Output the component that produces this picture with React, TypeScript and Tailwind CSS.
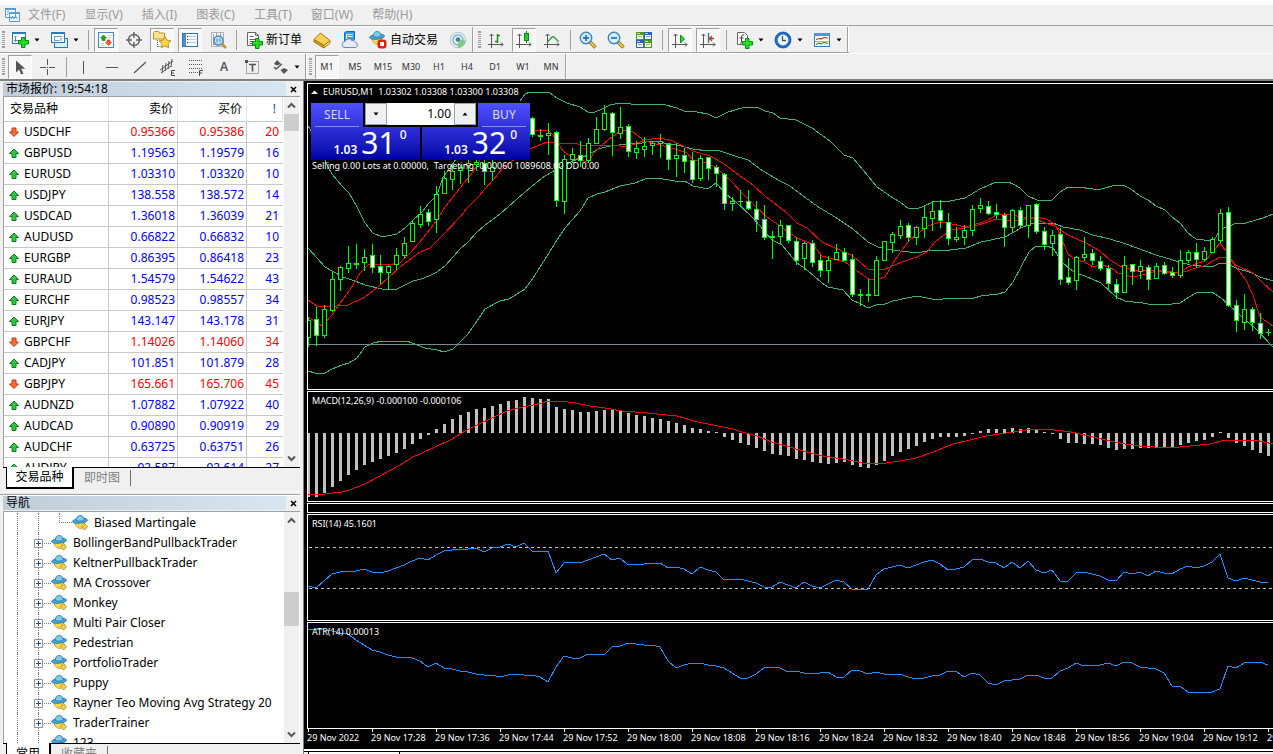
import React from "react";

type Candle = [high: number, top: number, bottom: number, low: number, filled: 0 | 1];

const FIRST_X = 308;
const STEP = 8;

const earlyCandles: Candle[] = [
  [317, 320, 337, 346, 0], [307, 319, 335, 345, 1], [305, 309, 335, 337, 0], [272, 279, 310, 311, 0],
  [266, 267, 279, 290, 0], [246, 263, 268, 272, 0], [244, 263, 264, 268, 0], [249, 257, 262, 270, 0],
  [244, 255, 267, 272, 1], [255, 266, 272, 283, 1], [265, 266, 272, 289, 0], [248, 255, 264, 269, 0],
  [237, 243, 255, 257, 0], [220, 223, 241, 241, 0], [206, 214, 224, 227, 0], [209, 212, 221, 225, 1],
  [186, 194, 219, 232, 0], [171, 178, 193, 193, 0], [164, 171, 179, 189, 0], [165, 167, 170, 183, 0],
  [160, 163, 165, 182, 0], [157, 162, 164, 170, 0], [160, 163, 171, 184, 1], [160, 167, 171, 180, 0],
];

const lateCandles: Candle[] = [
  [117, 118, 134, 136, 1], [129, 135, 136, 140, 0], [123, 133, 135, 154, 0], [131, 132, 200, 206, 1],
  [155, 159, 201, 213, 0], [148, 154, 159, 162, 0], [141, 155, 160, 166, 1], [138, 143, 160, 162, 0],
  [117, 129, 143, 143, 0], [105, 113, 129, 130, 0], [112, 113, 132, 155, 1], [107, 127, 133, 138, 0],
  [124, 126, 151, 156, 1], [141, 148, 152, 158, 0], [137, 146, 149, 156, 0], [141, 143, 145, 154, 0],
  [134, 141, 143, 157, 0], [143, 144, 159, 169, 1], [143, 155, 158, 176, 0], [148, 155, 161, 172, 1],
  [152, 160, 179, 182, 1], [155, 158, 178, 180, 0], [157, 157, 168, 179, 1], [165, 167, 173, 186, 1],
  [173, 174, 203, 209, 1], [197, 201, 203, 210, 0], [190, 201, 201, 206, 0], [190, 201, 208, 209, 1],
  [201, 209, 219, 231, 1], [205, 219, 237, 239, 1], [231, 236, 237, 258, 0], [220, 225, 236, 243, 0],
  [225, 225, 240, 242, 1], [237, 241, 260, 264, 1], [242, 243, 258, 269, 0], [240, 243, 262, 266, 1],
  [255, 260, 270, 276, 1], [256, 260, 270, 282, 0], [244, 252, 259, 259, 0], [248, 252, 260, 260, 1],
  [254, 259, 294, 296, 1], [289, 294, 295, 305, 0], [279, 294, 295, 301, 0], [256, 260, 295, 295, 0],
  [241, 241, 260, 260, 0], [232, 234, 242, 252, 0], [220, 226, 235, 238, 0], [223, 225, 237, 241, 1],
  [226, 227, 237, 244, 0], [206, 217, 228, 237, 0], [201, 211, 218, 230, 0], [200, 210, 220, 227, 1],
  [213, 222, 238, 244, 1], [227, 237, 239, 241, 0], [225, 230, 237, 244, 0], [205, 209, 230, 235, 0],
  [198, 205, 208, 212, 0], [201, 206, 213, 214, 1], [204, 212, 214, 218, 1], [213, 215, 227, 246, 1],
  [209, 210, 227, 232, 0], [207, 210, 225, 227, 1], [205, 205, 225, 237, 0], [203, 204, 231, 233, 1],
  [227, 231, 244, 249, 1], [230, 235, 243, 255, 0], [228, 234, 279, 284, 1], [258, 277, 282, 284, 1],
  [256, 257, 280, 289, 0], [237, 254, 257, 260, 0], [249, 253, 260, 264, 1], [256, 261, 268, 270, 1],
  [265, 268, 283, 288, 1], [279, 284, 292, 298, 1], [256, 265, 292, 292, 0], [264, 264, 271, 284, 1],
  [260, 266, 271, 278, 0], [265, 267, 279, 289, 1], [263, 266, 278, 278, 0], [262, 265, 273, 274, 1],
  [267, 272, 275, 277, 1], [250, 260, 275, 277, 0], [250, 252, 260, 262, 0], [243, 252, 259, 267, 1],
  [247, 251, 259, 260, 0], [237, 239, 252, 252, 0], [209, 213, 240, 242, 0], [207, 212, 305, 306, 1],
  [300, 305, 320, 331, 1], [294, 309, 322, 329, 0], [307, 309, 322, 330, 1], [313, 323, 333, 338, 1],
  [329, 332, 332, 335, 0],
];

const upperBandStart =
  "307,124 316,140 328,167 332,174 342,186 349,193 357,207 365,223 373,233 382,237 397,234 405,228 413,220 422,212 429,203 437,195 443,177 450,168 462,150";
const upperBand =
  "520,101 525,94 530,92 545,92 550,93 557,98 567,103 580,107 588,112 595,112 602,109 610,105 620,103 642,105 650,104 662,104 677,108 684,111 697,112 708,114 716,118 728,112 735,110 745,107 757,107 765,111 773,113 780,118 796,120 812,128 830,141 844,155 853,158 868,176 877,187 893,198 900,202 908,208 917,209 924,206 933,202 943,201 950,201 965,198 980,189 996,182 1008,182 1013,184 1020,188 1028,196 1037,200 1052,200 1060,192 1068,187 1078,187 1093,189 1101,189 1116,185 1125,186 1131,189 1140,196 1148,200 1156,206 1165,210 1172,217 1180,223 1188,233 1196,239 1212,241 1216,237 1220,229 1228,227 1236,223 1246,223 1263,218 1273,214";
const middleBand =
  "308,248 317,258 325,267 332,271 343,277 355,281 365,285 382,289 388,290 397,289 413,281 421,279 429,276 437,272 445,266 453,257 460,249 468,242 476,233 484,226 500,214 525,192 542,178 557,169 573,161 588,155 598,149 610,146 628,144 642,143 650,141 658,142 677,145 693,149 708,151 717,150 732,155 748,160 763,171 780,181 790,186 803,196 820,208 835,217 853,229 868,242 878,247 892,250 917,253 932,250 950,250 966,248 981,242 1005,237 1021,228 1030,224 1053,223 1063,227 1080,230 1093,235 1110,239 1126,244 1156,255 1173,260 1190,265 1212,267 1220,263 1226,263 1236,268 1252,273 1260,277 1273,281";
const lowerBand =
  "308,371 315,373 325,373 332,369 342,365 349,363 357,358 365,347 373,343 382,341 397,342 407,341 417,345 425,348 437,350 444,352 453,349 462,340 468,334 477,321 485,309 500,301 509,299 525,289 533,278 542,264 557,240 565,228 580,211 588,198 597,194 605,192 620,186 635,183 645,179 653,178 663,179 675,181 685,181 693,186 708,189 716,183 727,195 735,201 753,218 772,240 782,245 797,263 807,270 822,283 828,287 843,290 852,300 861,304 868,308 876,305 885,304 893,301 907,298 917,296 932,299 943,299 953,298 974,298 981,296 998,294 1005,292 1013,282 1021,267 1029,252 1036,246 1046,246 1053,248 1063,263 1070,269 1076,273 1085,276 1101,283 1116,297 1125,301 1133,302 1143,303 1148,304 1165,305 1180,303 1189,297 1196,293 1212,292 1221,298 1228,304 1243,318 1255,328 1273,347";
const fastAverage =
  "308,317 322,326 332,315 340,303 350,290 360,273 368,265 377,264 387,265 400,263 410,253 420,242 437,220 445,207 460,188 473,172 482,157 500,140 532,132 538,130 548,130 553,135 563,151 572,157 580,159 588,163 593,154 602,145 613,136 622,130 633,132 645,141 660,145 675,149 687,153 693,160 708,163 718,169 733,183 741,192 757,208 767,217 780,226 797,238 812,244 822,256 833,259 845,262 860,273 870,280 878,279 885,277 893,263 902,250 909,241 917,234 928,226 940,222 948,223 965,227 980,223 988,220 996,215 1010,214 1020,217 1036,217 1046,219 1053,223 1058,230 1068,254 1076,260 1085,262 1093,267 1101,265 1110,267 1118,273 1133,277 1146,274 1156,271 1168,273 1180,272 1188,267 1198,263 1205,261 1211,254 1220,243 1226,251 1236,267 1246,280 1253,295 1260,317 1273,326";
const slowAverage =
  "308,300 317,306 325,307 348,305 365,297 377,288 388,278 400,267 420,252 430,248 443,235 460,217 467,208 478,197 493,180 503,168 520,155 532,148 547,142 558,143 575,143 583,146 600,145 620,146 627,147 640,142 645,140 660,138 673,141 683,146 693,151 710,156 723,163 740,176 753,185 765,196 787,213 797,223 807,228 822,242 833,247 853,256 868,269 885,269 902,262 917,257 927,252 935,242 951,230 971,227 985,223 996,219 1018,221 1028,218 1038,220 1048,224 1055,226 1068,235 1086,243 1100,251 1110,260 1120,266 1135,271 1148,270 1165,271 1180,273 1190,270 1206,265 1220,257 1226,258 1236,265 1253,273 1263,283 1273,292";
const macdSignal =
  "308,494 325,494 342,492 349,490 365,484 380,476 400,465 413,457 433,448 452,439 467,430 477,425 492,418 507,411 523,407 533,405 542,403 548,401 560,401 575,403 590,406 605,408 622,411 647,413 677,416 698,422 713,425 733,429 742,432 757,436 772,442 783,445 803,451 823,456 843,459 863,463 886,463 900,461 916,458 933,452 953,444 970,440 986,436 1013,432 1026,430 1045,429 1063,431 1076,433 1093,437 1110,441 1125,444 1140,446 1156,447 1180,447 1210,444 1225,440 1255,440 1273,444";

const macdBars = [
  64, 64, 60, 54, 48, 42, 37, 32, 29, 26, 23, 20, 16, 11, 6, 2, -4, -9, -14, -18, -21, -24, -25, -27, -29, -32, -33,
  -36, -35, -34, -34, -26, -24, -23, -21, -21, -22, -23, -23, -22, -20, -18, -17, -15, -14, -12, -10, -8, -5, -4, -2,
  -1, 4, 7, 10, 12, 15, 18, 21, 22, 23, 26, 27, 29, 30, 31, 30, 29, 32, 34, 35, 32, 28, 23, 19, 16, 13, 9, 6, 4, 4, 4,
  3, 1, -2, -4, -4, -4, -5, -4, -5, -4, -1, 1, 6, 10, 10, 11, 11, 12, 15, 17, 16, 16, 15, 15, 15, 15, 14, 12, 10, 8,
  7, 4, -1, 5, 10, 13, 17, 20, 23,
];

const rsi = [
  586, 588, 581, 574, 572, 571, 571, 569, 572, 573, 571, 568, 565, 561, 558, 560, 555, 551, 550, 549, 549, 548, 552,
  548, 547, 544, 547, 543, 551, 552, 551, 573, 563, 562, 563, 560, 557, 554, 560, 558, 565, 564, 564, 563, 563, 568,
  567, 569, 574, 567, 570, 572, 580, 579, 579, 581, 583, 587, 587, 582, 585, 588, 582, 586, 588, 584, 580, 582, 589,
  589, 589, 575, 569, 567, 565, 568, 565, 562, 560, 564, 570, 569, 567, 560, 559, 562, 563, 568, 562, 568, 561, 570,
  573, 570, 581, 581, 573, 572, 574, 576, 580, 581, 572, 574, 572, 576, 571, 573, 574, 569, 566, 568, 566, 562, 554,
  578, 581, 578, 580, 582, 582,
];

const atr = [
  630, 629, 630, 631, 633, 634, 640, 645, 650, 652, 655, 657, 657, 658, 661, 667, 663, 668, 669, 671, 672, 674, 675,
  675, 677, 675, 674, 675, 675, 677, 682, 667, 656, 658, 658, 654, 654, 655, 647, 646, 643, 644, 645, 645, 647, 661,
  668, 665, 663, 663, 665, 666, 668, 673, 678, 678, 674, 668, 667, 668, 672, 671, 673, 673, 673, 672, 677, 677, 670,
  671, 674, 672, 674, 674, 674, 677, 679, 678, 676, 675, 671, 671, 677, 673, 675, 683, 685, 681, 680, 679, 675, 675,
  678, 678, 671, 668, 663, 666, 665, 665, 663, 666, 662, 663, 667, 668, 669, 673, 686, 686, 692, 692, 692, 692, 689,
  666, 668, 663, 662, 662, 665,
];

const toPoints = (values: number[]) => values.map((y, i) => `${FIRST_X + i * STEP},${y}`).join(" ");

function Line({ points, color }: { points: string; color: string }) {
  return <polyline points={points} fill="none" stroke={color} strokeWidth="1" shapeRendering="crispEdges" />;
}

function Candles({ data, from }: { data: Candle[]; from: number }) {
  return (
    <g shapeRendering="crispEdges">
      {data.map(([high, top, bottom, low, filled], i) => {
        const x = FIRST_X + (from + i) * STEP;
        return (
          <g key={i} fill="#00ff00">
            <rect x={x} y={high} width="1" height={low - high + 1} />
            <rect x={x - 2} y={top} width="5" height={bottom - top + 1} />
            {bottom - top > 1 && (
              <rect x={x - 1} y={top + 1} width="3" height={bottom - top - 1} fill={filled ? "#fff" : "#000"} />
            )}
          </g>
        );
      })}
    </g>
  );
}

/* ---------- icons ---------- */

function Icon({ children, size = 18 }: { children: React.ReactNode; size?: 16 | 18 | 20 }) {
  return (
    <svg viewBox={`0 0 ${size} ${size}`} width={size} height={size} className="shrink-0" aria-hidden="true">
      {children}
    </svg>
  );
}

const GreenPlus = ({ x, y }: { x: number; y: number }) => (
  <path
    transform={`translate(${x} ${y})`}
    d="M3.500 .5h3.500v3h3.500v3.500h-3.500v3.500h-3.500v-3.500h-3v-3.500h3z"
    fill="#22e022"
    stroke="#0a8a12"
  />
);

const NewChartIcon = () => (
  <Icon>
    <rect x="1.500" y="1.500" width="13" height="11" fill="#fff" stroke="#2f78b8" />
    <path d="M1 2h14" stroke="#2f78b8" strokeWidth="2" />
    <path d="M4.500 5v6M3 9.500h8M3.500 6l1-1 1 1" stroke="#5f8fb5" fill="none" />
    <GreenPlus x={7} y={6} />
  </Icon>
);
const ProfilesIcon = () => (
  <Icon>
    <rect x="4.500" y="7.500" width="13" height="9" fill="#d9ecfa" stroke="#2f78b8" />
    <rect x="1.500" y="1.500" width="13" height="10" fill="#f4faff" stroke="#2f78b8" />
    <path d="M1 2h14" stroke="#2f78b8" strokeWidth="2" />
    <path d="M4 5.500h8M4.500 5v4M4 9.500h5M11 7v3" stroke="#6d9dc4" />
  </Icon>
);
const MarketWatchIcon = () => (
  <Icon>
    <rect x="1.500" y="1.500" width="15" height="15" fill="#fff" stroke="#3b8bd0" />
    <path d="M6.500 4l3 3H8v2.500H5V7H3.500z" fill="#19a519" stroke="#0a7a10" strokeWidth=".6" />
    <path d="M11.500 14.500l-3-3H10V9h3v2.500h1.500z" fill="#ff5a2a" stroke="#c03000" strokeWidth=".6" />
    <path d="M11 4.500h4M11 6.500h3" stroke="#ccc" />
    <path d="M4 12.500h3M4 14.500h3" stroke="#ccc" />
  </Icon>
);
const TargetIcon = () => (
  <Icon>
    <circle cx="9" cy="9" r="5.500" fill="none" stroke="#606060" strokeWidth="1.400" />
    <path d="M9 1v6M9 11v6M1 9h6M11 9h6" stroke="#606060" strokeWidth="1.400" />
  </Icon>
);
const StarFolderIcon = () => (
  <Icon size={20}>
    <path d="M1.500 2.500l1-1h4l1 1.500h5v6h-11z" fill="#fbe58d" stroke="#b9922b" />
    <path d="M5.500 10v7M5.500 16.500h3" stroke="#555" strokeDasharray="1 1" />
    <path d="M13 6.500l1.900 3.700 4.100.6-3 2.900.7 4.100-3.700-1.900-3.700 1.900.7-4.100-3-2.900 4.100-.6z" fill="#ffd94a" stroke="#b9922b" />
  </Icon>
);
const NavigatorIcon = () => (
  <Icon>
    <rect x="1.500" y="2.500" width="15" height="13" fill="#fff" stroke="#2f78b8" />
    <path d="M3.500 3v12" stroke="#4b8fd0" strokeWidth="3" />
    <path d="M6 5.500h9M6 8.500h9M6 11.500h9" stroke="#b5c8de" />
    <path d="M6 5.500h1M6 8.500h1M6 11.500h1" stroke="#404040" />
  </Icon>
);
const TesterIcon = () => (
  <Icon>
    <path d="M2.500 1.500h12v14h-12z" fill="#f3f5f7" stroke="#b0b0b0" />
    <path d="M4.500 3v11M7.500 2v3M11.500 2v4M4 13.500h4" stroke="#8aa3b8" />
    <path d="M13 13l4 4" stroke="#c89420" strokeWidth="2.500" />
    <circle cx="9.500" cy="9.500" r="4.500" fill="#bfe0f7" stroke="#4d88bb" strokeWidth="1.400" />
    <path d="M8 7.500v4M11 7v4" stroke="#4d88bb" />
  </Icon>
);
const NewOrderIcon = () => (
  <Icon>
    <path d="M2.500 1.500h8l3 3v10h-11z" fill="#fff" stroke="#666" />
    <path d="M10.500 1.500v3h3M4.500 5.500h4M4.500 8.500h7M4.500 10.500h5M4.500 12.500h3" stroke="#666" fill="none" />
    <GreenPlus x={7} y={7} />
  </Icon>
);
const GoldIcon = () => (
  <Icon>
    <path d="M1 8.500l6.500-6.500 9.500 7.500-6 5z" fill="#f7cf55" stroke="#a8740f" />
    <path d="M1 8.500l10 6v2.500l-10-6z" fill="#d99b22" stroke="#a8740f" />
    <path d="M11 14.500l6-5v2.500l-6 5z" fill="#fbe9a6" stroke="#a8740f" />
  </Icon>
);
const CloudIcon = () => (
  <Icon>
    <path d="M3.500 1.500l2-1h8v8l-2 2h-8z" fill="#2a9ef0" stroke="#1273bd" />
    <path d="M6 3.500h6M6 5.500h6M5.500 3v6" stroke="#cfeaff" />
    <path d="M4 16.500a3 3 0 0 1 0-6 3.800 3.800 0 0 1 6.800-1 3 3 0 0 1 3.700 2 2.600 2.600 0 0 1 0 5z" fill="#e4ebf5" stroke="#7089ab" />
  </Icon>
);
const ExpertIcon = ({ stopped }: { stopped?: boolean }) => (
  <Icon size={stopped ? 18 : 16}>
    <path d="M3 7.500c.5 4.500 4 6.500 6.500 6l3-2.500.5-4z" fill="#f7d94c" stroke="#b08d1c" strokeWidth=".7" />
    <ellipse cx="8" cy="5.800" rx="7.500" ry="2.400" fill="#4aa9dd" stroke="#22709f" strokeWidth=".8" transform="rotate(-6 8 5.800)" />
    <path d="M4.200 5.500c0-3 1.500-5 4-5s3.800 1.800 4 4.500c-2 1.300-6 1.500-8 .5z" fill="#7fcbf0" stroke="#22709f" strokeWidth=".8" />
    {stopped ? (
      <g>
        <rect x="8.500" y="8.500" width="9" height="9" rx="3" fill="#dd2211" />
        <path d="M11 11h4v4h-4z" fill="#fff" />
      </g>
    ) : (
      <path d="M12.500 8.500l3 3.300-3 3.300-3-3.300z" fill="#f1d04b" stroke="#a98414" strokeWidth=".8" />
    )}
  </Icon>
);
const SignalIcon = () => (
  <Icon>
    <circle cx="9" cy="9" r="7.700" fill="#e6eef0" stroke="#a9c8d2" />
    <circle cx="9" cy="9" r="5" fill="none" stroke="#86b4c8" strokeWidth="1.400" />
    <path d="M9 9c.5 3 .3 6-.5 8 4.500 0 7.500-3 8-7-2-1-5-1.500-7.500-1z" fill="#6cc46c" opacity=".75" />
    <circle cx="9" cy="8.500" r="2.200" fill="#3a7fb0" />
  </Icon>
);
const Axes = () => <path d="M4.500 3v14M1 13.500h15M2.500 5l2-2 2 2M14 11.500l2 2-2 2" stroke="#555" fill="none" />;
const BarsIcon = () => (
  <Icon>
    <Axes />
    <path d="M10.500 3v9M8 10.500h3M10 4.500h3" stroke="#159015" strokeWidth="1.500" />
  </Icon>
);
const CandleIcon = () => (
  <Icon>
    <Axes />
    <path d="M11.500 0v12" stroke="#0a8a12" />
    <rect x="9.500" y="2.500" width="4" height="7" fill="#22cc33" stroke="#0a8a12" />
  </Icon>
);
const LineIcon = () => (
  <Icon>
    <Axes />
    <path d="M4.500 11l4-4.500c1-1 2-1 3 0l4 4" stroke="#2d9a3a" strokeWidth="1.300" fill="none" />
  </Icon>
);
const ZoomIcon = ({ plus }: { plus?: boolean }) => (
  <Icon>
    <path d="M11 11l5.500 5.500" stroke="#8f6a14" strokeWidth="3.500" />
    <path d="M11.500 11.500l4.700 4.700" stroke="#f3cf4b" strokeWidth="1.800" />
    <circle cx="7" cy="7" r="5.700" fill="#d8effc" stroke="#3a86c0" strokeWidth="1.400" />
    <path d={plus ? "M4 7h6M7 4v6" : "M4 7h6"} stroke="#2c7ab5" strokeWidth="1.800" />
  </Icon>
);
const tiles = [
  { x: 1, y: 1, color: "#4c9a14" },
  { x: 9, y: 1, color: "#2a5fd0" },
  { x: 1, y: 9, color: "#2a5fd0" },
  { x: 9, y: 9, color: "#4c9a14" },
];
const TilesIcon = () => (
  <Icon>
    {tiles.map(({ x, y, color }) => (
      <g key={`${x}-${y}`}>
        <rect x={x} y={y} width="8" height="8" fill={color} />
        <rect x={x + 1} y={y + 3} width="6" height="4" fill="#f4f8f0" />
        <rect x={x + 2} y={y + 4} width="4" height="1" fill={color} opacity=".6" />
        <rect x={x + 1} y={y + 1} width="3" height="1" fill="#fff" opacity=".7" />
      </g>
    ))}
  </Icon>
);
const AutoScrollIcon = () => (
  <Icon>
    <Axes />
    <path d="M9.500 4l4 4-4 4z" fill="#2fd04a" stroke="#0a8a12" />
  </Icon>
);
const ShiftIcon = () => (
  <Icon>
    <Axes />
    <path d="M9.500 2v10" stroke="#2f78b8" strokeWidth="1.400" />
    <path d="M15 7.500h-4M13 5l-2.500 2.500L13 10" stroke="#c0391b" strokeWidth="1.400" fill="none" />
  </Icon>
);
const IndicatorIcon = () => (
  <Icon>
    <path d="M2.500 1.500h7l3 3v9h-10z" fill="#fff" stroke="#666" />
    <path d="M9 4c-2-.5-2.500.5-2.500 2v5c0 1-.5 1.500-1.500 1.200M4.500 7h4" stroke="#444" fill="none" />
    <GreenPlus x={7} y={7} />
  </Icon>
);
const ClockIcon = () => (
  <Icon>
    <circle cx="9" cy="9" r="6.700" fill="#eef6ff" stroke="#1c6fce" strokeWidth="2.600" />
    <circle cx="9" cy="9" r="8" fill="none" stroke="#124f9c" strokeWidth=".8" />
    <path d="M8.500 5v4.500h3.500" stroke="#555" strokeWidth="1.300" fill="none" />
  </Icon>
);
const TemplateIcon = () => (
  <Icon>
    <rect x="1.500" y="2.500" width="15" height="13" fill="#fff" stroke="#2f78b8" />
    <path d="M1 3.500h16" stroke="#4e96d2" strokeWidth="3" />
    <path d="M3 8.500l3-1 2 .5 3-1.500 4 .5" stroke="#b0391b" strokeWidth="1.200" fill="none" />
    <path d="M3 13.500l3-1.500 2 1 3-2 4 2" stroke="#2d9a3a" strokeWidth="1.200" fill="none" />
    <path d="M2 10.500h14" stroke="#9db7d4" />
  </Icon>
);
const CursorIcon = () => (
  <Icon>
    <path d="M5 2.500v12l3-3 2.200 5 2.200-1-2.200-4.800h4z" fill="#555" />
  </Icon>
);
const CrossIcon = () => (
  <Icon>
    <path d="M8.500 1v6M8.500 11v6M1 9.500h6M10 9.500h6M8 9.500h1" stroke="#555" shapeRendering="crispEdges" />
  </Icon>
);
const VLineIcon = () => <Icon><path d="M8.500 3v13" stroke="#555" /></Icon>;
const HLineIcon = () => <Icon><path d="M3 9.500h12" stroke="#555" /></Icon>;
const TrendIcon = () => <Icon><path d="M3 15L15 4" stroke="#555" strokeWidth="1.200" /></Icon>;
const ChannelIcon = () => (
  <Icon>
    <path d="M1 12L14 3M2 15l10-7M4 7l-1 8M7 5L6 13M10 3L9 11M13 1l-1 8" stroke="#555" fill="none" />
    <path d="M16 12.500h-3.500v5H16M12.500 15H15" stroke="#444" fill="none" />
  </Icon>
);
const FiboIcon = () => (
  <Icon>
    <path d="M2 2.500h14M2 6.500h14M2 10.500h14M2 14.500h9" stroke="#555" strokeDasharray="1 1" shapeRendering="crispEdges" />
    <path d="M16 12.500h-3.500V18M12.500 15H15" stroke="#444" fill="none" />
  </Icon>
);
const LabelIcon = () => (
  <Icon>
    <rect x="3.500" y="3.500" width="12" height="12" fill="none" stroke="#555" strokeDasharray="1 1" />
    <path d="M2 2h3v3H2z" fill="#555" />
    <path d="M6 6.500h7M9.500 6v7.500" stroke="#555" strokeWidth="1.600" />
  </Icon>
);
const ArrowsIcon = () => (
  <Icon>
    <path d="M6 2l4 4-4 1.500-3-1.500zM13 16l4-4-4-2-3.500 2z" fill="#555" />
    <path d="M3 9l2 2 6-5" stroke="#555" fill="none" strokeWidth="1.300" />
  </Icon>
);
const AppIcon = () => (
  <Icon size={16}>
    <path d="M.5 1.500h10v9H.5zM4.500 5.500h10v9h-10z" fill="#f4faff" stroke="#5b9bd8" />
    <path d="M0 2h11M4 6h11" stroke="#5b9bd8" strokeWidth="2" />
    <path d="M6 12l1.500-3L9 12l1.500-3 2 3" stroke="#5b9bd8" fill="none" />
    <path d="M2 4.500h2M2 7.500l1.500-1" stroke="#5b9bd8" />
  </Icon>
);

function Chevron({ up }: { up?: boolean }) {
  return (
    <svg viewBox="0 0 9 7" width="9" height="7" aria-hidden="true">
      <path d={up ? "M1 5.500L4.500 2 8 5.500" : "M1 1.500L4.500 5 8 1.500"} stroke="#555" strokeWidth="2" fill="none" />
    </svg>
  );
}

function DirectionArrow({ up }: { up: boolean }) {
  return (
    <svg viewBox="0 0 12 12" width="12" height="12" className="shrink-0" aria-hidden="true">
      {up ? (
        <path d="M6 2l4.500 4.500H8v4H4v-4H1.500z" fill="#33c443" stroke="#117a1c" />
      ) : (
        <path d="M6 10.500L10.500 6H8V2H4v4H1.500z" fill="#ff6a35" stroke="#b83a10" />
      )}
    </svg>
  );
}

/* ---------- toolbar parts ---------- */

function Tool({
  label,
  pressed,
  text,
  children,
}: {
  label: string;
  pressed?: boolean;
  text?: boolean;
  children: React.ReactNode;
}) {
  return (
    <button
      aria-label={label}
      aria-pressed={pressed}
      className={`mx-[2px] flex h-6 shrink-0 items-center border ${text ? "pl-[2px]" : "w-6 justify-center"} ${
        pressed ? "border-t-[#a0a0a0] border-r-white border-b-white border-l-[#a0a0a0] bg-[#f7f7f7]" : "border-transparent"
      }`}
    >
      {children}
    </button>
  );
}

function Drop({ label }: { label: string }) {
  return (
    <button aria-label={label} className="flex h-6 w-[11px] shrink-0 items-center">
      <svg viewBox="0 0 6 4" width="6" height="4" aria-hidden="true">
        <path d="M.5 .5h5L3 3.500z" fill="#000" />
      </svg>
    </button>
  );
}

const Sep = () => (
  <span className="flex h-5 w-2 shrink-0 justify-center">
    <span className="w-px bg-[#a0a0a0]" />
  </span>
);

const Grip = () => (
  <span className="mr-px ml-[2px] flex h-5 w-[3px] shrink-0 flex-col justify-between py-px">
    {Array.from({ length: 10 }, (_, i) => (
      <span key={i} className="h-px bg-[#a0a0a0]" />
    ))}
  </span>
);

const Edge = () => <span className="h-full w-[2px] shrink-0 border-l border-r border-l-[#a0a0a0] border-r-white" />;

const menus = ["文件(F)", "显示(V)", "插入(I)", "图表(C)", "工具(T)", "窗口(W)", "帮助(H)"];
const frames = ["M1", "M5", "M15", "M30", "H1", "H4", "D1", "W1", "MN"];

function Toolbars() {
  return (
    <header className="shrink-0 bg-[#f0f0f0]">
      <div className="h-[5px] bg-white" />
      <nav className="flex h-[21px] items-center gap-[7px] border-b border-[#a0a0a0] pl-[5px] text-xs text-[#9a9a9a]">
        <AppIcon />
        <div className="flex gap-[19px]">
          {menus.map((m) => (
            <button key={m} className="whitespace-nowrap">
              {m}
            </button>
          ))}
        </div>
      </nav>
      <div className="flex">
        <div className="flex h-[27px] items-center border-t border-b border-t-white border-b-[#a0a0a0] text-xs">
          <Grip />
          <Tool label="新图表"><NewChartIcon /></Tool>
          <Drop label="新图表菜单" />
          <Tool label="配置文件"><ProfilesIcon /></Tool>
          <Drop label="配置文件菜单" />
          <Sep />
          <Tool label="市场报价" pressed><MarketWatchIcon /></Tool>
          <Tool label="数据窗口"><TargetIcon /></Tool>
          <Tool label="导航" pressed><StarFolderIcon /></Tool>
          <Tool label="终端" pressed><NavigatorIcon /></Tool>
          <Tool label="策略测试"><TesterIcon /></Tool>
          <Sep />
          <Tool label="新订单" text>
            <NewOrderIcon />
            <span className="px-[3px] whitespace-nowrap">新订单</span>
          </Tool>
          <Tool label="编辑器"><GoldIcon /></Tool>
          <Tool label="市场"><CloudIcon /></Tool>
          <Tool label="自动交易" text>
            <ExpertIcon stopped />
            <span className="px-[3px] whitespace-nowrap">自动交易</span>
          </Tool>
          <Tool label="信号"><SignalIcon /></Tool>
          <Edge />
          <span className="w-[2px]" />
          <Grip />
          <Tool label="柱状图"><BarsIcon /></Tool>
          <Tool label="阴阳烛" pressed><CandleIcon /></Tool>
          <Tool label="折线图"><LineIcon /></Tool>
          <Sep />
          <Tool label="放大"><ZoomIcon plus /></Tool>
          <Tool label="缩小"><ZoomIcon /></Tool>
          <Tool label="平铺窗口"><TilesIcon /></Tool>
          <Sep />
          <Tool label="自动滚动" pressed><AutoScrollIcon /></Tool>
          <Tool label="图表平移" pressed><ShiftIcon /></Tool>
          <Sep />
          <Tool label="指标"><IndicatorIcon /></Tool>
          <Drop label="指标菜单" />
          <Tool label="时段"><ClockIcon /></Tool>
          <Drop label="时段菜单" />
          <Tool label="模板"><TemplateIcon /></Tool>
          <Drop label="模板菜单" />
          <Edge />
        </div>
      </div>
      <div className="flex h-[26px] items-center border-t border-white">
        <Grip />
        <Tool label="光标" pressed><CursorIcon /></Tool>
        <Tool label="十字准线"><CrossIcon /></Tool>
        <Sep />
        <Tool label="垂直线"><VLineIcon /></Tool>
        <Tool label="水平线"><HLineIcon /></Tool>
        <Tool label="趋势线"><TrendIcon /></Tool>
        <Tool label="等距通道"><ChannelIcon /></Tool>
        <Tool label="斐波那契"><FiboIcon /></Tool>
        <Tool label="文本"><span className="text-xs font-semibold text-[#555]">A</span></Tool>
        <Tool label="文本标签"><LabelIcon /></Tool>
        <Tool label="箭头"><ArrowsIcon /></Tool>
        <Drop label="箭头菜单" />
        <Edge />
        <Grip />
        {frames.map((f, i) => (
          <Tool key={f} label={f} pressed={i === 0}>
            <span className="text-[9px] text-[#333]">{f}</span>
          </Tool>
        ))}
        <Edge />
      </div>
      <div className="h-[2px] bg-[#808080]" />
    </header>
  );
}

/* ---------- left panels ---------- */

function PanelTitle({ children }: { children: React.ReactNode }) {
  return (
    <div className="flex h-[14px] items-center text-xs">
      <h2 className="h-full flex-1 bg-linear-to-r from-[#bfcddb] to-[#d8e5f3] pl-[3px] leading-[13px]">{children}</h2>
      <button aria-label="关闭" className="flex w-[14px] justify-center">
        <svg viewBox="0 0 7 7" width="7" height="7" aria-hidden="true">
          <path d="M1 1l5 5M6 1L1 6" stroke="#000" strokeWidth="1.600" />
        </svg>
      </button>
    </div>
  );
}

function ScrollBar({ children }: { children: React.ReactNode }) {
  return (
    <div className="mx-px flex w-[15px] shrink-0 flex-col items-center bg-[#f0f0f0]">
      <span className="flex h-[17px] items-center">
        <Chevron up />
      </span>
      {children}
      <span className="mt-auto flex h-[17px] items-center">
        <Chevron />
      </span>
    </div>
  );
}

const quotes: [string, string, string, number, boolean][] = [
  ["USDCHF", "0.95366", "0.95386", 20, false],
  ["GBPUSD", "1.19563", "1.19579", 16, true],
  ["EURUSD", "1.03310", "1.03320", 10, true],
  ["USDJPY", "138.558", "138.572", 14, true],
  ["USDCAD", "1.36018", "1.36039", 21, true],
  ["AUDUSD", "0.66822", "0.66832", 10, true],
  ["EURGBP", "0.86395", "0.86418", 23, true],
  ["EURAUD", "1.54579", "1.54622", 43, true],
  ["EURCHF", "0.98523", "0.98557", 34, true],
  ["EURJPY", "143.147", "143.178", 31, true],
  ["GBPCHF", "1.14026", "1.14060", 34, false],
  ["CADJPY", "101.851", "101.879", 28, true],
  ["GBPJPY", "165.661", "165.706", 45, false],
  ["AUDNZD", "1.07882", "1.07922", 40, true],
  ["AUDCAD", "0.90890", "0.90919", 29, true],
  ["AUDCHF", "0.63725", "0.63751", 26, true],
  ["AUDJPY", "92.587", "92.614", 27, true],
];

function MarketWatch() {
  return (
    <section className="shrink-0 pt-px pl-[3px]">
      <PanelTitle>市场报价: 19:54:18</PanelTitle>
      <div className="flex h-[371px] overflow-hidden border-t border-l border-[#a0a0a0] bg-white">
        <div className="flex-1 overflow-hidden">
          <table className="w-full table-fixed border-separate border-spacing-0 text-xs leading-5">
            <colgroup>
              <col className="w-[105px]" />
              <col className="w-[69px]" />
              <col className="w-[69px]" />
              <col />
            </colgroup>
            <thead>
              <tr className="h-[25px]">
                <th className="border-r border-b border-r-[#e5e5e5] border-b-[#c8c8c8] pl-[6px] text-left font-normal">交易品种</th>
                <th className="border-r border-b border-r-[#e5e5e5] border-b-[#c8c8c8] pr-1 text-right font-normal">卖价</th>
                <th className="border-r border-b border-r-[#e5e5e5] border-b-[#c8c8c8] pr-1 text-right font-normal">买价</th>
                <th className="border-r border-b border-r-[#e5e5e5] border-b-[#c8c8c8] pr-[6px] text-right font-normal text-[#1c4a8c]">!</th>
              </tr>
            </thead>
            <tbody>
              {quotes.map(([symbol, bid, ask, spread, up]) => (
                <tr key={symbol} className={`h-[21px] ${up ? "text-[#0000ff]" : "text-[#ff0000]"}`}>
                  <td className="border-r border-b border-[#c8c8c8] p-0 pl-1 text-black">
                    <span className="flex items-center gap-1">
                      <DirectionArrow up={up} />
                      {symbol}
                    </span>
                  </td>
                  <td className="border-r border-b border-[#c8c8c8] p-0 pr-[2px] text-right">{bid}</td>
                  <td className="border-r border-b border-[#c8c8c8] p-0 pr-[2px] text-right">{ask}</td>
                  <td className="border-b border-[#c8c8c8] p-0 pr-1 text-right">{spread}</td>
                </tr>
              ))}
            </tbody>
          </table>
        </div>
        <ScrollBar>
          <span className="h-[17px] w-full bg-[#cdcdcd]" />
        </ScrollBar>
      </div>
      <div className="flex h-[25px] border-b border-white text-xs">
        <span className="w-[3px] border-t border-black" />
        <button className="h-[22px] w-[68px] shrink-0 border-r-2 border-b-2 border-l border-black bg-white leading-5 whitespace-nowrap">
          交易品种
        </button>
        <SecondTab>即时图</SecondTab>
      </div>
    </section>
  );
}

function SecondTab({ children }: { children: React.ReactNode }) {
  return (
    <span className="flex flex-1 items-start border-t border-black pt-[2px]">
      <button className="h-4 border-r border-[#707070] px-[10px] leading-4 whitespace-nowrap text-[#808080]">{children}</button>
    </span>
  );
}

const experts = [
  "BollingerBandPullbackTrader",
  "KeltnerPullbackTrader",
  "MA Crossover",
  "Monkey",
  "Multi Pair Closer",
  "Pedestrian",
  "PortfolioTrader",
  "Puppy",
  "Rayner Teo Moving Avg Strategy 20",
  "TraderTrainer",
];

const Guide = () => <span className="h-full w-[21px] shrink-0 border-l border-dotted border-[#808080]" />;

function TreeRow({ name, expandable }: { name: string; expandable: boolean }) {
  return (
    <li className="flex h-5 items-center pl-[13px] whitespace-nowrap">
      <Guide />
      <span className="relative flex h-full w-[13px] shrink-0 items-center border-l border-dotted border-[#808080]">
        {expandable && (
          <>
            <span className="w-full border-t border-dotted border-[#808080]" />
            <svg viewBox="0 0 9 9" width="9" height="9" className="absolute top-[6px] -left-[5px]" aria-hidden="true">
              <path d="M.5 .5h8v8h-8z" fill="#fff" stroke="#919191" />
              <path d="M2 4.500h5M4.500 2v5" stroke="#2b4c9b" />
            </svg>
          </>
        )}
      </span>
      <ExpertIcon />
      <span className="pl-[6px]">{name}</span>
    </li>
  );
}

function Navigator() {
  return (
    <section className="flex min-h-0 flex-1 flex-col border-t border-[#a0a0a0] pl-[3px]">
      <div className="h-px shrink-0 bg-white" />
      <div className="shrink-0 pb-px">
        <PanelTitle>导航</PanelTitle>
      </div>
      <div className="flex min-h-0 flex-1 border-t border-l border-[#a0a0a0] bg-white">
        <ul className="flex-1 overflow-hidden pt-px text-xs">
          <li className="flex h-5 items-center pl-[13px] whitespace-nowrap">
            <Guide />
            <Guide />
            <span className="h-[10px] w-[13px] shrink-0 self-start border-b border-l border-dotted border-[#808080]" />
            <ExpertIcon />
            <span className="pl-[6px]">Biased Martingale</span>
          </li>
          {experts.map((name) => (
            <TreeRow key={name} name={name} expandable />
          ))}
          <TreeRow name="123" expandable={false} />
        </ul>
        <ScrollBar>
          <span className="mt-[63px] h-[34px] w-full bg-[#cdcdcd]" />
        </ScrollBar>
      </div>
      <div className="flex h-[11px] shrink-0 overflow-hidden text-xs">
        <span className="w-[3px] border-t border-black" />
        <button className="h-[22px] shrink-0 border-r-2 border-l border-black bg-white px-[9px] leading-5 whitespace-nowrap">常用</button>
        <SecondTab>收藏夹</SecondTab>
      </div>
    </section>
  );
}

/* ---------- chart window ---------- */

function Plot({ top, height, children }: { top: number; height: number; children: React.ReactNode }) {
  return (
    <svg
      viewBox={`308 ${top} 965 ${height}`}
      preserveAspectRatio="xMinYMin slice"
      className="block h-full w-full"
      aria-hidden="true"
    >
      {children}
    </svg>
  );
}

function PriceButton({ side, pip, align }: { side: string; pip: string; align: "left" | "right" }) {
  return (
    <button className="flex h-[57px] flex-1 flex-col bg-linear-to-b from-[#5050ff] via-[#2a2ad2] to-[#0000a4] px-1 text-white">
      <span
        className={`h-[24px] w-[44px] border-b border-[#8c8cff] text-center text-xs leading-6 text-[#dcdcff] ${
          align === "right" ? "self-end" : ""
        }`}
      >
        {side}
      </span>
      <span className="flex h-[33px] items-start self-end pr-[9px]">
        <span className="pt-[13px] text-xs leading-5 font-semibold">1.03</span>
        <span className="pl-1 text-[30px] leading-8">{pip}</span>
        <span className="pl-1 text-xs leading-4 font-medium">0</span>
      </span>
    </button>
  );
}

function OneClick() {
  return (
    <div className="absolute top-[19px] left-[3px] flex w-[219px] gap-[2px] bg-black">
      <PriceButton side="SELL" pip="31" align="left" />
      <PriceButton side="BUY" pip="32" align="right" />
      <div className="absolute top-0 left-[52px] flex h-6 w-[115px] bg-black px-[2px] pb-[2px]">
        <button aria-label="减少" className="flex w-[22px] items-center justify-center border border-[#a0a0a0] bg-[#f0f0f0]">
          <svg viewBox="0 0 6 4" width="6" height="4" aria-hidden="true">
            <path d="M.5 .5h5L3 3.500z" />
          </svg>
        </button>
        <input aria-label="手数" defaultValue="1.00" className="min-w-0 flex-1 bg-white pr-[3px] text-right text-xs text-black" />
        <button aria-label="增加" className="flex w-[22px] items-center justify-center border border-[#a0a0a0] bg-[#f0f0f0]">
          <svg viewBox="0 0 6 4" width="6" height="4" aria-hidden="true">
            <path d="M.5 3.500h5L3 .5z" />
          </svg>
        </button>
      </div>
    </div>
  );
}

const times = [
  "2022", "17:28", "17:36", "17:44", "17:52", "18:00", "18:08", "18:16",
  "18:24", "18:32", "18:40", "18:48", "18:56", "19:04", "19:12", "19:20",
];

const paneClass = "relative shrink-0 overflow-hidden border-t border-b border-l border-white";
const paneLabel = "absolute left-1 whitespace-nowrap text-[9px] leading-3 text-white";

function ChartWindow() {
  return (
    <main className="flex min-w-0 flex-1 flex-col border-l border-[#808080] bg-black">
      <div className="flex flex-col gap-px pt-[2px] pl-[3px]">
        <section className={`${paneClass} h-[307px]`}>
          <Plot top={84} height={305}>
            <rect x="308" y="344" width="965" height="1" fill="#778899" />
            <Line points={upperBandStart} color="#3cb371" />
            <Line points={upperBand} color="#3cb371" />
            <Line points={middleBand} color="#3cb371" />
            <Line points={lowerBand} color="#3cb371" />
            <Line points={fastAverage} color="#ff0000" />
            <Line points={slowAverage} color="#ff0000" />
            <Candles data={earlyCandles} from={0} />
            <Candles data={lateCandles} from={28} />
          </Plot>
          <h1 className="absolute top-[2px] left-[3px] flex items-center gap-[5px] text-[9px] leading-3 whitespace-pre text-white">
            <svg viewBox="0 0 7 4" width="7" height="4" aria-hidden="true">
              <path d="M0 4h7L3.500 .5z" fill="#fff" />
            </svg>
            {"EURUSD,M1  1.03302 1.03308 1.03300 1.03308"}
          </h1>
          <OneClick />
          <p className={`${paneLabel} top-[76px] whitespace-pre`}>
            {"Selling 0.00 Lots at 0.00000,  Targeting -0.00060 1089608.00 DD 0.00"}
          </p>
        </section>
        <section className={`${paneClass} h-[111px]`}>
          <Plot top={392} height={109}>
            <g fill="#c0c0c0" shapeRendering="crispEdges">
              {macdBars.map((v, i) => (
                <rect key={i} x={FIRST_X + i * STEP - 1} y={v < 0 ? 433 + v : 433} width="3" height={Math.abs(v)} />
              ))}
            </g>
            <Line points={macdSignal} color="#ff0000" />
          </Plot>
          <p className={`${paneLabel} top-[3px]`}>MACD(12,26,9) -0.000100 -0.000106</p>
        </section>
        <div className={`${paneClass} h-[10px]`} />
        <section className={`${paneClass} h-[107px]`}>
          <Plot top={515} height={105}>
            <path d="M309 547.500h964M309 588.500h964" stroke="#c0c0c0" strokeDasharray="3 3" shapeRendering="crispEdges" />
            <Line points={toPoints(rsi)} color="#1e90ff" />
          </Plot>
          <p className={`${paneLabel} top-[3px]`}>RSI(14) 45.1601</p>
        </section>
        <section className={`${paneClass} h-[107px]`}>
          <Plot top={623} height={105}>
            <Line points={toPoints(atr)} color="#1e90ff" />
          </Plot>
          <p className={`${paneLabel} top-[3px]`}>ATR(14) 0.00013</p>
        </section>
      </div>
      <div className="flex h-5 shrink-0 overflow-hidden pl-[4px] text-[9px] text-white">
        {times.map((t) => (
          <span key={t} className="w-16 shrink-0 whitespace-nowrap">
            <span className="block h-[3px] w-px bg-white" />
            <span className="-ml-px block leading-3">29 Nov {t}</span>
          </span>
        ))}
      </div>
      <div className="flex flex-1 flex-col bg-white pt-[2px]">
        <div className="flex flex-1 border-t border-black bg-[#f0f0f0]">
          <span className="w-[5px] border-r border-black" />
          <span className="w-[91px] border-r border-black bg-white" />
        </div>
      </div>
    </main>
  );
}

export default function App() {
  return (
    <div className="flex h-screen flex-col overflow-hidden bg-[#f0f0f0] font-['Noto_Sans','Noto_Sans_CJK_SC',sans-serif] text-black">
      <Toolbars />
      <div className="flex min-h-0 flex-1">
        <aside className="flex w-[303px] shrink-0 flex-col pr-[3px]">
          <MarketWatch />
          <div className="h-[2px] shrink-0" />
          <Navigator />
        </aside>
        <ChartWindow />
      </div>
    </div>
  );
}
